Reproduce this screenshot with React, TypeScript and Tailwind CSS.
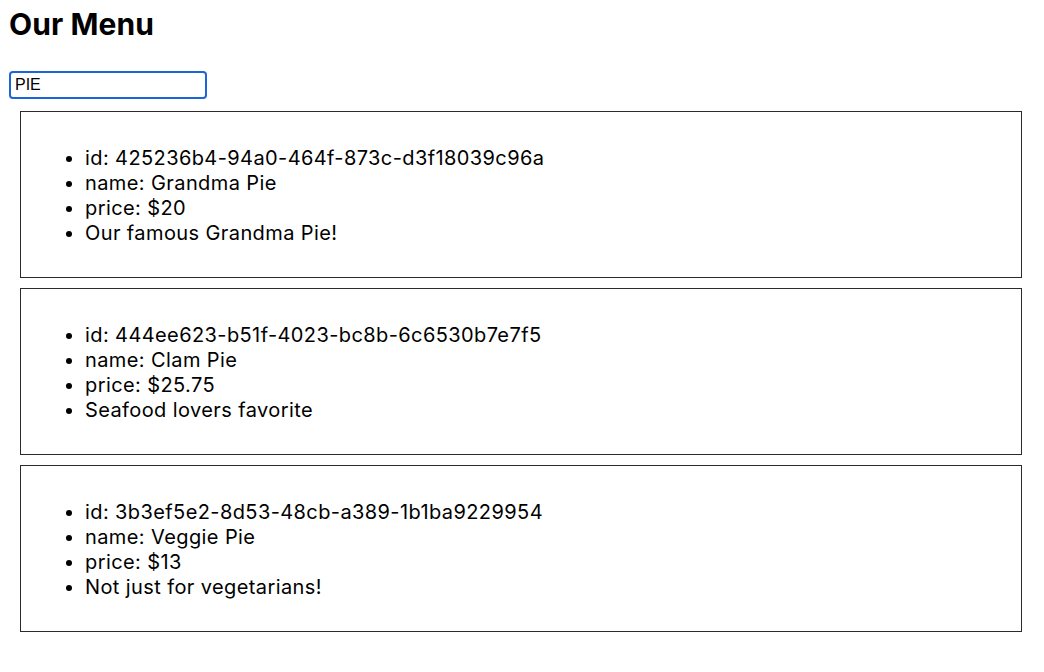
const items = [
  {
    id: "425236b4-94a0-464f-873c-d3f18039c96a",
    name: "Grandma Pie",
    price: "$20",
    description: "Our famous Grandma Pie!",
  },
  {
    id: "444ee623-b51f-4023-bc8b-6c6530b7e7f5",
    name: "Clam Pie",
    price: "$25.75",
    description: "Seafood lovers favorite",
  },
  {
    id: "3b3ef5e2-8d53-48cb-a389-1b1ba9229954",
    name: "Veggie Pie",
    price: "$13",
    description: "Not just for vegetarians!",
  },
];

export default function App() {
  return (
    <div className="min-h-screen bg-white text-black font-['Inter','Noto_Sans',sans-serif] pl-[9px] pr-[22px]">
      <h1 className="text-[30px] font-bold leading-[36px] pt-[6px] tracking-[0.1px]">
        Our Menu
      </h1>
      <input
        defaultValue="PIE"
        className="mt-[29px] block w-[198px] h-[28px] rounded-[4px] border-2 border-[#1a66d6] px-[4px] text-[16px] font-['Liberation_Sans',sans-serif] outline-none"
      />
      <div className="ml-[11px] mt-[12px] flex flex-col gap-[10px]">
        {items.map((item) => (
          <div
            key={item.id}
            className="border border-[#2b2b2b] h-[167px] pt-[34px] pl-[64px] text-[20px] leading-[25px] tracking-[0.4px]"
          >
            <ul className="list-disc pl-0">
              <li>id: {item.id}</li>
              <li>name: {item.name}</li>
              <li>price: {item.price}</li>
              <li>{item.description}</li>
            </ul>
          </div>
        ))}
      </div>
    </div>
  );
}
